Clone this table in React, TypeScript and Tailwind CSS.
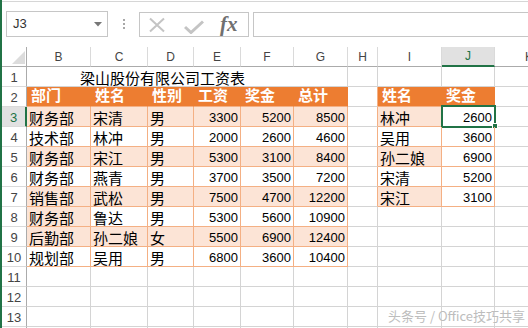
import React from "react";

const COLW = [
  "w-[64px]",
  "w-[57px]",
  "w-[46px]",
  "w-[47px]",
  "w-[53px]",
  "w-[54px]",
  "w-[30px]",
  "w-[64px]",
  "w-[53px]",
];
const LETTERS = ["B", "C", "D", "E", "F", "G", "H", "I", "J"];

const HEAD = ["部门", "姓名", "性别", "工资", "奖金", "总计"];
const MAIN = [
  ["财务部", "宋清", "男", "3300", "5200", "8500"],
  ["技术部", "林冲", "男", "2000", "2600", "4600"],
  ["财务部", "宋江", "男", "5300", "3100", "8400"],
  ["财务部", "燕青", "男", "3700", "3500", "7200"],
  ["销售部", "武松", "男", "7500", "4700", "12200"],
  ["财务部", "鲁达", "男", "5300", "5600", "10900"],
  ["后勤部", "孙二娘", "女", "5500", "6900", "12400"],
  ["规划部", "吴用", "男", "6800", "3600", "10400"],
];
const SIDE = [
  ["林冲", "2600"],
  ["吴用", "3600"],
  ["孙二娘", "6900"],
  ["宋清", "5200"],
  ["宋江", "3100"],
];

const GRAY = "border-r border-b border-[#d4d4d4]";
const ORG = "border-r border-b border-[#f4b084]";
const HDR = "border-r border-b border-[#ed7d31] border-b-[#f4b084]";
const HCOL = "border-r border-b border-[#d4d4d4] border-r-[#f4b084]";
const SHADE = "bg-[#fce4d6]";

type CellSpec = {
  text?: string;
  kind?: "t" | "n" | "h";
  bg: string;
  bd: string;
  sel?: boolean;
};

function cellSpec(r: number, c: number): CellSpec {
  let spec: CellSpec = { bg: "", bd: GRAY };
  if (r === 2 && c <= 5) {
    spec = { text: HEAD[c], kind: "h", bg: "bg-[#ed7d31]", bd: HDR };
  } else if (r >= 3 && r <= 10 && c <= 5) {
    const shaded = r % 2 === 1 || (r === 8 && c === 0);
    spec = {
      text: MAIN[r - 3][c],
      kind: c <= 2 ? "t" : "n",
      bg: shaded ? SHADE : "",
      bd: ORG,
    };
  } else if (c === 6 && r >= 2 && r <= 7) {
    spec = { bg: "", bd: HCOL };
  } else if (r === 2 && (c === 7 || c === 8)) {
    spec = {
      text: c === 7 ? "姓名" : "奖金",
      kind: "h",
      bg: "bg-[#ed7d31]",
      bd: HDR,
    };
  } else if (r >= 3 && r <= 7 && (c === 7 || c === 8)) {
    spec = {
      text: SIDE[r - 3][c - 7],
      kind: c === 7 ? "t" : "n",
      bg: c === 7 && r % 2 === 1 ? SHADE : "",
      bd: ORG,
      sel: r === 3 && c === 8,
    };
  }
  return spec;
}

function Cell({ r, c }: { r: number; c: number }) {
  const s = cellSpec(r, c);
  let inner: React.ReactNode = null;
  let align = "";
  if (s.kind === "h") {
    align = "items-start pl-[4px] text-white font-bold text-[15px] leading-[15px]";
    inner = <span className="mt-[1px]">{s.text}</span>;
  } else if (s.kind === "t") {
    align = "items-end pl-[2px] text-black text-[15px] leading-[15px]";
    inner = <span>{s.text}</span>;
  } else if (s.kind === "n") {
    align = "items-end justify-end pr-[2px] pb-[1px] text-black text-[13px] leading-[15px]";
    inner = <span>{s.text}</span>;
  }
  return (
    <div className={`${COLW[c]} h-full shrink-0 flex relative ${align} ${s.bg} ${s.bd}`}>
      {inner}
      {s.sel && (
        <>
          <div className="absolute -left-[1px] -top-[2px] w-[55px] h-[23px] border-2 border-[#217346]" />
          <div className="absolute left-[50px] top-[16px] w-[6px] h-[6px] bg-[#217346] border border-white" />
        </>
      )}
    </div>
  );
}

function RowHeader({ r, label }: { r: number; label: boolean }) {
  const active = r === 3;
  return (
    <div
      className={`w-[25px] h-full shrink-0 flex items-end justify-center pb-[1px] text-[13px] leading-[15px] border-b border-[#dadada] ${
        active
          ? "bg-[#e1e1e1] text-[#217346] border-r-2 border-r-[#217346]"
          : "text-[#444] border-r border-r-[#ababab]"
      }`}
    >
      {label ? r : null}
    </div>
  );
}

function Row({ r }: { r: number }) {
  if (r === 1) {
    return (
      <div className="flex h-[20px]">
        <RowHeader r={1} label />
        <div className="w-[321px] h-full shrink-0 flex items-end pl-[53px] text-[15px] leading-[15px] text-black border-r border-b border-[#d4d4d4]">
          <span>梁山股份有限公司工资表</span>
        </div>
        {[6, 7, 8].map((c) => (
          <div key={c} className={`${COLW[c]} h-full shrink-0 ${GRAY}`} />
        ))}
        <div className="flex-1 h-full border-b border-[#d4d4d4]" />
      </div>
    );
  }
  return (
    <div className="flex h-[20px]">
      <RowHeader r={r} label={r <= 13} />
      {[0, 1, 2, 3, 4, 5, 6, 7, 8].map((c) => (
        <Cell key={c} r={r} c={c} />
      ))}
      <div className="flex-1 h-full border-b border-[#d4d4d4]" />
    </div>
  );
}

function ColumnHeaders() {
  return (
    <div className="flex h-[20px]">
      <div className="w-[25px] h-full shrink-0 relative border-r border-b border-[#ababab]">
        <svg className="absolute left-[10px] top-[4px]" width="13" height="13" viewBox="0 0 13 13">
          <polygon points="13,0 13,13 0,13" fill="#dcdcdc" />
        </svg>
      </div>
      {LETTERS.map((l, i) => {
        const active = l === "J";
        return (
          <div
            key={l}
            className={`${COLW[i]} h-full shrink-0 flex items-center justify-center text-[12px] leading-[14px] border-r border-r-[#dadada] ${
              active
                ? "bg-[#e1e1e1] text-[#217346] border-b-2 border-b-[#217346]"
                : "text-[#444] border-b border-b-[#ababab]"
            }`}
          >
            {l}
          </div>
        );
      })}
      <div className="flex-1 h-full flex items-center pl-[30px] text-[12px] leading-[14px] text-[#444] border-b border-[#ababab] overflow-hidden">
        K
      </div>
    </div>
  );
}

function FormulaBar() {
  return (
    <div>
      <div className="h-[2px] border-b border-[#d6d6d6]" />
      <div className="h-[45px] flex items-start pt-[9px]">
        <div className="ml-[4px] w-[102px] h-[26px] shrink-0 border border-[#c6c6c6] flex items-center justify-between pl-[6px] pr-[5px] text-[13px] text-[#333]">
          <span>J3</span>
          <svg width="8" height="5" viewBox="0 0 8 5">
            <polygon points="0,0 8,0 4,4.5" fill="#777" />
          </svg>
        </div>
        <div className="w-[31px] h-[26px] shrink-0 flex flex-col items-center justify-center gap-[2px]">
          <div className="w-[2px] h-[2px] bg-[#a8a8a8]" />
          <div className="w-[2px] h-[2px] bg-[#a8a8a8]" />
          <div className="w-[2px] h-[2px] bg-[#a8a8a8]" />
        </div>
        <div className="mt-[1px] w-[110px] h-[25px] shrink-0 border border-[#c6c6c6] flex items-center">
          <svg className="ml-[8px]" width="18" height="16" viewBox="0 0 18 16">
            <path d="M2 1.5 L16 14.5 M16 1.5 L2 14.5" stroke="#c4c4c4" strokeWidth="2" fill="none" />
          </svg>
          <svg className="ml-[18px] mt-[4px]" width="20" height="14" viewBox="0 0 20 14">
            <path d="M1 7 L7 12.5 L19 1.5" stroke="#c4c4c4" strokeWidth="3" fill="none" />
          </svg>
          <span className="ml-[16px] font-['Liberation_Serif',serif] italic font-bold text-[21px] leading-[21px] text-[#707070]">
            fx
          </span>
        </div>
        <div className="mt-[1px] ml-[4px] flex-1 h-[25px] border-y border-l border-[#c6c6c6]" />
      </div>
    </div>
  );
}

export default function App() {
  const rows = [1, 2, 3, 4, 5, 6, 7, 8, 9, 10, 11, 12, 13, 14];
  return (
    <div className="relative w-[528px] h-[328px] overflow-hidden bg-white border-l-2 border-[#217346] font-['Liberation_Sans','Noto_Sans_CJK_SC',sans-serif]">
      <FormulaBar />
      <ColumnHeaders />
      {rows.map((r) => (
        <Row key={r} r={r} />
      ))}
      <div className="absolute left-[386px] top-[308px] text-[13px] leading-[16px] text-[#bdbdbd] [text-shadow:0_0_2px_#ffffff] font-['Noto_Sans_CJK_SC',sans-serif]">
        头条号 / Office技巧共享
      </div>
    </div>
  );
}
